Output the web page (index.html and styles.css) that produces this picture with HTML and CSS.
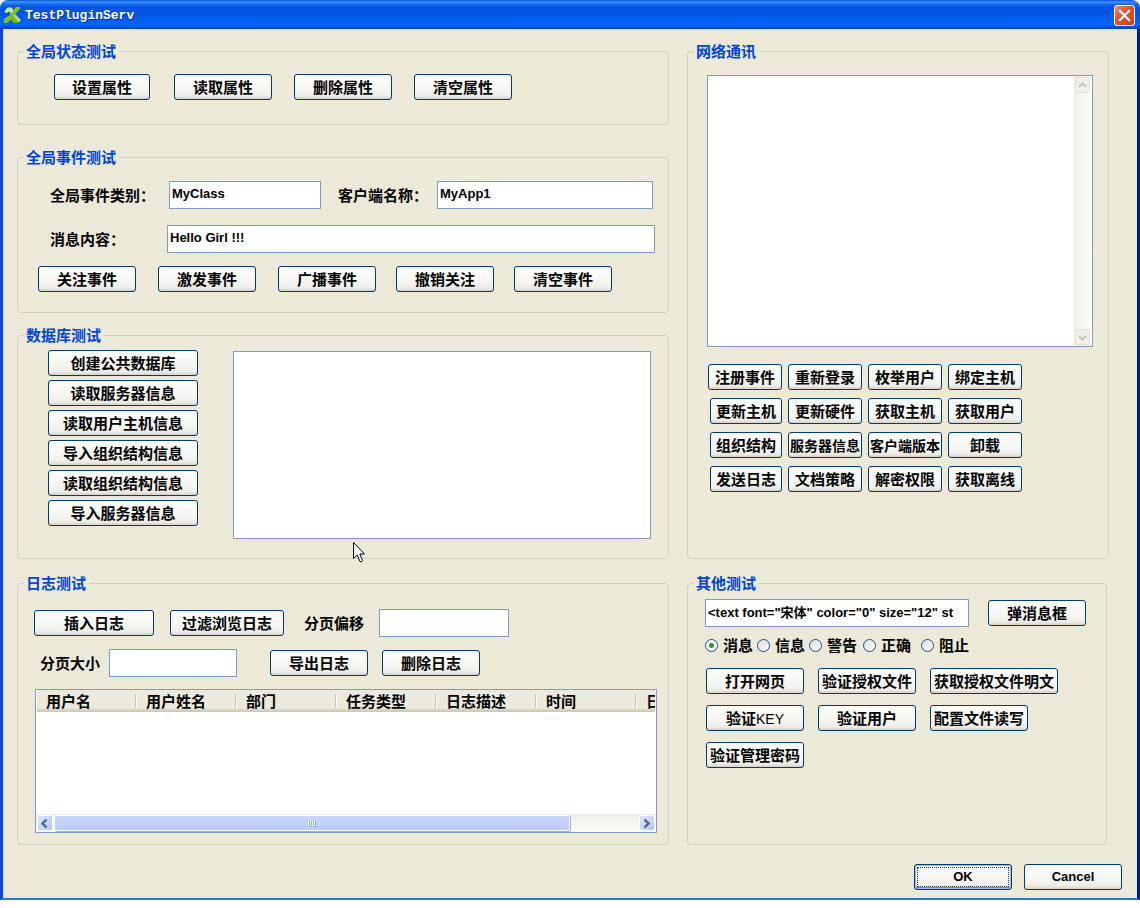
FILE: index.html
```html
<!DOCTYPE html>
<html lang="zh-CN">
<head>
<meta charset="utf-8">
<title>TestPluginServ</title>
<link rel="stylesheet" href="styles.css">
</head>
<body>
<div class="window">
  <header class="titlebar">
    <svg class="app-icon" viewBox="0 0 17 17" width="17" height="17" aria-hidden="true">
      <path d="M0 5 L3 1 Q7 -1 9 2 L10 5 L7 8 L6 5 Q5 4 3 6 Z" fill="#c5e88a"/>
      <path d="M12 0 H16 V2 L6 13 L3 16 H0 V12 L6 8 Z" fill="#7fc41c"/>
      <path d="M9 9 L11 7 L17 13 L14 16 Z" fill="#b4dc62"/>
      <path d="M6 12 L9 9 L15 16 H10 Z" fill="#76b900"/>
    </svg>
    <h1 class="title">TestPluginServ</h1>
    <button class="close" type="button" aria-label="关闭">
      <svg viewBox="0 0 19 19" width="19" height="19"><path d="M5 5 L14 14 M14 5 L5 14" stroke="#fff" stroke-width="2.2" stroke-linecap="square"/></svg>
    </button>
  </header>

  <main class="client">
    <div class="panels">
      <div class="stack">
        <fieldset class="group">
          <legend>全局状态测试</legend>
          <div class="state-row">
            <button class="btn btn-96" type="button">设置属性</button>
            <button class="btn" type="button">读取属性</button>
            <button class="btn" type="button">删除属性</button>
            <button class="btn" type="button">清空属性</button>
          </div>
        </fieldset>

        <fieldset class="group group-event">
          <legend>全局事件测试</legend>
          <div class="class-row">
            <label class="event-label" for="cls">全局事件类别：</label>
            <input class="text class-input" id="cls" type="text" value="MyClass">
            <label class="client-label" for="app">客户端名称：</label>
            <input class="text grow" id="app" type="text" value="MyApp1">
          </div>
          <div class="message-row">
            <label class="message-label" for="msg">消息内容：</label>
            <input class="text grow" id="msg" type="text" value="Hello Girl !!!">
          </div>
          <div class="event-buttons">
            <button class="btn btn-98" type="button">关注事件</button>
            <button class="btn btn-98" type="button">激发事件</button>
            <button class="btn btn-98" type="button">广播事件</button>
            <button class="btn btn-98" type="button">撤销关注</button>
            <button class="btn btn-98" type="button">清空事件</button>
          </div>
        </fieldset>

        <fieldset class="group group-db">
          <legend>数据库测试</legend>
          <div class="db-row">
            <div class="db-buttons">
              <button class="btn" type="button">创建公共数据库</button>
              <button class="btn" type="button">读取服务器信息</button>
              <button class="btn" type="button">读取用户主机信息</button>
              <button class="btn" type="button">导入组织结构信息</button>
              <button class="btn" type="button">读取组织结构信息</button>
              <button class="btn" type="button">导入服务器信息</button>
            </div>
            <textarea class="db-output" aria-label="数据库输出"></textarea>
          </div>
        </fieldset>
      </div>

      <fieldset class="group">
        <legend>网络通讯</legend>
        <div class="net-output">
          <textarea aria-label="网络输出"></textarea>
          <div class="vscroll">
            <button class="arrow arrow-off" type="button" aria-label="向上"><svg viewBox="0 0 13 13" width="13" height="13"><path d="M3 8 L6.5 4.5 L10 8" fill="none" stroke="#c5c3b8" stroke-width="2"/></svg></button>
            <button class="arrow arrow-off" type="button" aria-label="向下"><svg viewBox="0 0 13 13" width="13" height="13"><path d="M3 5 L6.5 8.5 L10 5" fill="none" stroke="#c5c3b8" stroke-width="2"/></svg></button>
          </div>
        </div>
        <div class="net-buttons">
          <button class="btn" type="button">注册事件</button>
          <button class="btn" type="button">重新登录</button>
          <button class="btn" type="button">枚举用户</button>
          <button class="btn" type="button">绑定主机</button>
          <button class="btn btn-72" type="button">更新主机</button>
          <button class="btn" type="button">更新硬件</button>
          <button class="btn" type="button">获取主机</button>
          <button class="btn" type="button">获取用户</button>
          <button class="btn btn-72" type="button">组织结构</button>
          <button class="btn btn-tight" type="button">服务器信息</button>
          <button class="btn btn-tight" type="button">客户端版本</button>
          <button class="btn" type="button">卸载</button>
          <button class="btn btn-72" type="button">发送日志</button>
          <button class="btn" type="button">文档策略</button>
          <button class="btn" type="button">解密权限</button>
          <button class="btn" type="button">获取离线</button>
        </div>
      </fieldset>

      <fieldset class="group">
        <legend>日志测试</legend>
        <div class="log-row log-first">
          <button class="btn btn-insert" type="button">插入日志</button>
          <button class="btn btn-filter" type="button">过滤浏览日志</button>
          <label class="offset-label" for="off">分页偏移</label>
          <input class="text offset-input" id="off" type="text">
        </div>
        <div class="log-row log-second">
          <label class="size-label" for="size">分页大小</label>
          <input class="text size-input" id="size" type="text">
          <button class="btn btn-98" type="button">导出日志</button>
          <button class="btn btn-98" type="button">删除日志</button>
        </div>
        <div class="list">
          <div class="list-body">
            <table>
              <thead>
                <tr><th>用户名</th><th>用户姓名</th><th>部门</th><th>任务类型</th><th>日志描述</th><th>时间</th><th>日</th></tr>
              </thead>
            </table>
          </div>
          <div class="hscroll">
            <button class="arrow" type="button" aria-label="向左"><svg viewBox="0 0 13 13" width="13" height="13"><path d="M8.5 2.5 L4.5 6.5 L8.5 10.5" fill="none" stroke="#4d6185" stroke-width="2.4"/></svg></button>
            <div class="track"><div class="thumb"><svg viewBox="0 0 8 7" width="8" height="7"><path d="M.5 0V6M2.5 0V6M4.5 0V6M6.5 0V6" stroke="#eef4fe"/><path d="M1.5 1V7M3.5 1V7M5.5 1V7M7.5 1V7" stroke="#8cb0f8"/></svg></div></div>
            <button class="arrow" type="button" aria-label="向右"><svg viewBox="0 0 13 13" width="13" height="13"><path d="M4.5 2.5 L8.5 6.5 L4.5 10.5" fill="none" stroke="#4d6185" stroke-width="2.4"/></svg></button>
          </div>
        </div>
      </fieldset>

      <fieldset class="group group-other">
        <legend>其他测试</legend>
        <div class="popup-row">
          <input class="text grow" type="text" aria-label="消息文本" value="&lt;text font=&quot;宋体&quot; color=&quot;0&quot; size=&quot;12&quot; st">
          <button class="btn btn-98" type="button">弹消息框</button>
        </div>
        <div class="radios">
          <label><input type="radio" name="kind" checked>消息</label>
          <label><input type="radio" name="kind">信息</label>
          <label><input type="radio" name="kind">警告</label>
          <label><input type="radio" name="kind">正确</label>
          <label><input type="radio" name="kind">阻止</label>
        </div>
        <div class="other-rows">
          <div class="other-row">
            <button class="btn btn-98" type="button">打开网页</button>
            <button class="btn btn-98" type="button">验证授权文件</button>
            <button class="btn btn-128" type="button">获取授权文件明文</button>
          </div>
          <div class="other-row">
            <button class="btn btn-98" type="button">验证<span class="latin">KEY</span></button>
            <button class="btn btn-98" type="button">验证用户</button>
            <button class="btn btn-98" type="button">配置文件读写</button>
          </div>
          <div class="other-row">
            <button class="btn btn-98" type="button">验证管理密码</button>
          </div>
        </div>
      </fieldset>
    </div>

    <footer class="footer">
      <button class="btn btn-98 btn-latin btn-default" type="button">OK</button>
      <button class="btn btn-98 btn-latin" type="button">Cancel</button>
    </footer>
  </main>

  <svg class="pointer" viewBox="0 0 12 21" width="12" height="21" aria-hidden="true"><path d="M.5 .5 V16.5 L4.2 13 L7 19.5 Q8.5 20.5 9.5 18.5 L6.8 12 H11.5 Z" fill="#fff" stroke="#000"/></svg>
</div>
</body>
</html>
```

FILE: styles.css
```css
* { box-sizing: border-box; }

body {
  margin: 0;
  background: #fff;
  color: #000;
  font: bold 15px/20px "Noto Sans CJK SC", sans-serif;
}

button, input, textarea { font: inherit; color: inherit; margin: 0; }

.window { position: relative; }

.titlebar {
  display: flex;
  align-items: center;
  height: 29px;
  padding: 2px 5px 0 4px;
  border-radius: 8px 8px 0 0;
  background: linear-gradient(#0a4fd8 0, #3c94ff 2px, #1a6df2 4px, #0554e2 7px, #0454e3 14px, #0560f8 21px, #0463fb 25px, #0450de 27px, #0241c4 29px);
}

.title {
  flex: 1;
  margin: 0 0 0 4px;
  color: #fff;
  font: bold 13px/20px "Liberation Mono", monospace;
  text-shadow: 1px 1px 0 #0a2a88;
}

.close {
  width: 21px;
  height: 21px;
  padding: 0;
  border: 1px solid #fff;
  border-radius: 3px;
  background: linear-gradient(135deg, #ec9078, #e2552e 40%, #cc3e14);
}

.close svg, .arrow svg { display: block; }

.client {
  padding: 12px 0 8px;
  border: solid;
  border-width: 0 3px 2px;
  border-color: #0a4fe8 #0018a0 #3273d2 #0846ea;
  background: #ece9d8;
}

.panels {
  display: grid;
  grid-template-columns: minmax(0, 652fr) minmax(0, 422fr);
  gap: 14px 18px;
  padding: 0 28px 0 14px;
}

.group {
  min-width: 0;
  margin: 0;
  padding: 0;
  border: 1px solid #d0d0bf;
  border-radius: 4px;
}

.group-event { margin-top: 22px; }
.group-db { margin-top: 12px; }
.group-other { margin-right: 2px; }

legend {
  margin-left: 6px;
  padding: 0 3px 0 2px;
  color: #0046d5;
}

.btn {
  height: 26px;
  padding: 0;
  border: 1px solid #003c74;
  border-radius: 3px;
  background: linear-gradient(#fff, #f2f2ed 75%, #ecebe5 88%, #d6d0c5);
  line-height: 24px;
  white-space: nowrap;
}

.btn-72 { width: 72px; justify-self: end; }
.btn-96 { width: 96px; }
.btn-98 { width: 98px; }
.btn-128 { width: 128px; }
.btn-insert { width: 120px; }
.btn-filter { width: 114px; }
.btn-tight { font-size: 14px; }

.latin { font-family: "Liberation Sans", sans-serif; font-size: 14px; font-weight: normal; }
.btn-latin { font-family: "Liberation Sans", sans-serif; font-size: 13px; }

.btn-default {
  outline: 1px dotted #333;
  outline-offset: -4px;
  box-shadow: inset 0 0 0 1px #9db9f0, inset 0 -2px 0 #6982ee;
}

.text {
  height: 28px;
  min-width: 0;
  padding: 0 1px 4px 2px;
  border: 1px solid #7f9dc0;
  border-radius: 0;
  background: #fff;
  font: bold 13px/20px "Liberation Sans", "Noto Sans CJK SC", sans-serif;
}

.grow { flex: 1; }

textarea {
  display: block;
  padding: 2px;
  border: 1px solid #7f9dc0;
  background: #fff;
  resize: none;
}

.state-row {
  display: grid;
  grid-template-columns: repeat(4, 98px);
  gap: 22px;
  padding: 13px 0 24px 36px;
}

.class-row, .message-row, .log-row, .popup-row { display: flex; align-items: center; }

.class-row { padding: 14px 15px 0 32px; }
.event-label { width: 119px; }
.class-input { width: 152px; }
.client-label { width: 99px; margin-left: 17px; }
.message-row { padding: 16px 13px 0 32px; }
.message-label { width: 117px; }

.event-buttons {
  display: grid;
  grid-template-columns: 120px 120px 118px 118px 98px;
  padding: 13px 0 20px 20px;
}

.db-row {
  display: flex;
  gap: 35px;
  padding: 5px 17px 19px 30px;
}

.db-buttons { display: grid; gap: 4px; width: 150px; align-self: start; }
.db-output { flex: 1; height: 188px; min-width: 0; margin-top: 1px; }

.net-output {
  display: flex;
  height: 272px;
  margin: 14px 15px 0 19px;
  border: 1px solid #7f9dc0;
  background: #fff;
}

.net-output textarea { flex: 1; min-width: 0; border: 0; }

.vscroll {
  display: flex;
  flex-direction: column;
  justify-content: space-between;
  width: 18px;
  padding: 1px 2px 1px 1px;
  background: linear-gradient(90deg, #eeede5, #fefefb);
}

.net-buttons {
  display: grid;
  grid-template-columns: repeat(4, 74px);
  gap: 8px 6px;
  padding: 17px 0 20px 20px;
}

.log-first { padding: 16px 0 0 16px; }
.offset-label { width: 75px; margin-left: 20px; }
.offset-input { width: 130px; }
.btn-filter { margin-left: 16px; }
.log-second { padding: 12px 0 0 22px; }
.size-label { width: 69px; }
.size-input { width: 128px; margin-right: 33px; }
.log-second .btn + .btn { margin-left: 14px; }

.list {
  margin: 12px 11px 11px 17px;
  border: 1px solid #7f9dc0;
  background: #fff;
}

.list-body { height: 124px; margin: 0 1px; overflow: hidden; }

table { width: 700px; table-layout: fixed; border-collapse: collapse; }

th {
  height: 22px;
  padding: 0 0 0 9px;
  background:
    linear-gradient(#c7c5b2, #c7c5b2) right 1px top 4px / 1px 14px no-repeat,
    linear-gradient(#fff, #fff) right top 4px / 1px 14px no-repeat,
    linear-gradient(#ebeadb 18px, #e2dec9 19px, #d6d2c2 20px, #cbc7b8 22px);
  line-height: 20px;
  text-align: left;
  white-space: nowrap;
}

.hscroll {
  display: flex;
  align-items: center;
  height: 18px;
  padding: 0 1px;
  background: linear-gradient(#eeede5, #fefefb);
}

.arrow {
  width: 16px;
  height: 16px;
  padding: 0;
  border: 1px solid #fff;
  border-radius: 2px;
  background: linear-gradient(135deg, #dbe5fd, #b4c8f6);
}

.vscroll .arrow { width: 15px; }
.arrow-off { border-color: #e2e0d6; background: #f1efe6; }

.track { flex: 1; padding: 0 69px 0 1px; }

.thumb {
  display: flex;
  align-items: center;
  justify-content: center;
  height: 16px;
  border: 1px solid #fff;
  border-radius: 2px;
  box-shadow: 1px 1px 0 #9cb4e0;
  background: linear-gradient(#c9d7fc, #bccbfa);
}

.popup-row { gap: 19px; padding: 6px 20px 0 17px; }

.radios { display: flex; padding: 8px 0 0 17px; }
.radios label { display: flex; align-items: center; width: 52px; white-space: nowrap; }
.radios label:nth-child(3) { width: 54px; }
.radios label:nth-child(4) { width: 58px; }

.radios input {
  flex: none;
  appearance: none;
  width: 13px;
  height: 13px;
  margin: 0 5px 0 0;
  border: 1px solid #1d5281;
  border-radius: 50%;
  background: linear-gradient(135deg, #dcdcd7, #fff);
}

.radios input:checked { background: radial-gradient(circle, #21a121 0 2px, #fff 3px); }

.other-rows { display: grid; gap: 11px; padding: 13px 0 20px 18px; }
.other-row { display: flex; gap: 14px; }

.footer {
  display: flex;
  justify-content: flex-end;
  gap: 12px;
  padding: 19px 15px 0 0;
}

.pointer { position: absolute; left: 353px; top: 542px; }
```
